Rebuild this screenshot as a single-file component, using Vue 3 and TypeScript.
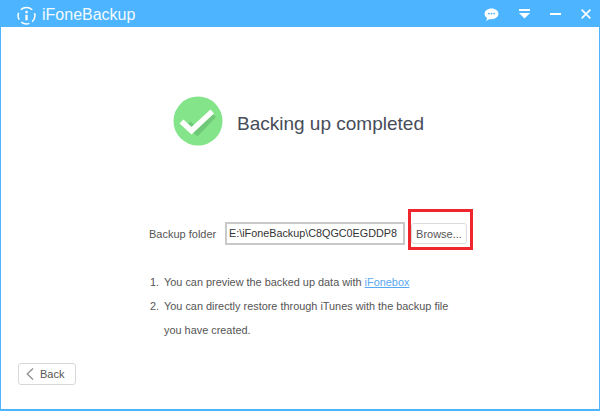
<script setup lang="ts">
const steps = [
  { n: '1.', text: 'You can preview the backed up data with ', link: 'iFonebox' },
  { n: '2.', text: 'You can directly restore through iTunes with the backup file', link: '' },
  { n: '', text: 'you have created.', link: '' },
]
</script>

<template>
  <div class="win">
    <header class="bar">
      <div class="brand">
        <svg class="logo" width="19" height="19" viewBox="0 0 20 20" fill="none" stroke="#fff">
          <path d="M4 4A8.800 8.800 0 0 1 16 4M18.500 7.500A8.800 8.800 0 0 1 16 16.400M13 18.300A8.800 8.800 0 0 1 4.600 17M2.300 14.400A8.800 8.800 0 0 1 1.700 7.200" stroke-width="1.600" />
          <path d="M10 9.300V15" stroke-width="2.400" />
          <circle cx="10" cy="6.400" r="1.400" fill="#fff" stroke="none" />
        </svg>
        <span class="title">iFoneBackup</span>
      </div>
      <div class="tools">
        <svg width="15" height="13" viewBox="0 0 16 14">
          <path d="M8 .5c4.200 0 7.500 2.500 7.500 5.700S12.200 12 8 12c-.8 0-1.500-.1-2.200-.2C4.800 12.800 3.300 13.500 1.800 13.400c.8-.6 1.400-1.500 1.500-2.600C1.500 9.700.5 8.100.5 6.200.5 3 3.800.5 8 .5z" fill="#fff" />
          <circle cx="5.200" cy="6" r="1" fill="#4db5ff" />
          <circle cx="8" cy="6" r="1" fill="#4db5ff" />
          <circle cx="10.800" cy="6" r="1" fill="#4db5ff" />
        </svg>
        <svg width="11" height="10" viewBox="0 0 11 10">
          <rect x="0" y="0" width="11" height="2" fill="#fff" />
          <path d="M0 4h11L5.500 9.500z" fill="#fff" />
        </svg>
        <svg width="11" height="2" viewBox="0 0 11 2">
          <rect width="11" height="2" fill="#fff" />
        </svg>
        <svg width="10" height="10" viewBox="0 0 11 11" stroke="#fff" stroke-width="1.800">
          <path d="M.7.7l9.600 9.600M10.300.7L.7 10.300" />
        </svg>
      </div>
    </header>

    <main class="body">
      <section class="status">
        <svg class="check" width="50" height="50" viewBox="0 0 50 50">
          <circle cx="25" cy="25" r="24.500" fill="#84e48a" />
          <path d="M11 28.500l5-4.500 7 7L38 16l3.500 3.500L23 39z" fill="#66bd70" opacity=".7" transform="translate(1.500 1.500)" />
          <path d="M6.500 27.500l4-4 8 7.500 19-17.500 3.500 4-22.500 21z" fill="#fff" />
        </svg>
        <h1>Backing up completed</h1>
      </section>

      <section class="folder">
        <span class="label">Backup folder</span>
        <div class="path">E:\iFoneBackup\C8QGC0EGDDP8</div>
        <div class="action">
          <button class="browse" type="button">Browse...</button>
          <div class="mark"></div>
        </div>
      </section>

      <ul class="steps">
        <li v-for="s in steps" :key="s.text">
          <span class="num">{{ s.n }}</span>
          <span>{{ s.text }}<a v-if="s.link">{{ s.link }}</a></span>
        </li>
      </ul>

      <button class="back" type="button">
        <svg width="8" height="12" viewBox="0 0 8 12" fill="none" stroke="#8a8a8a" stroke-width="1.200">
          <path d="M7 .5L1.200 6 7 11.500" />
        </svg>
        Back
      </button>
    </main>
  </div>
</template>

<style scoped>
.win {
  width: 600px;
  height: 411px;
  box-sizing: border-box;
  display: flex;
  flex-direction: column;
  font-family: "Liberation Sans", Arial, sans-serif;
  overflow: hidden;
}
.bar {
  height: 27px;
  flex: none;
  background: #4db5ff;
  color: #fff;
  display: flex;
  align-items: center;
  justify-content: space-between;
  padding: 0 9px 0 17px;
}
.brand {
  display: flex;
  align-items: center;
  gap: 6px;
  margin-top: 3px;
}
.title {
  font-size: 16px;
  color: #f2faff;
}
.tools {
  display: flex;
  align-items: center;
  gap: 20px;
  margin-top: 1px;
}
.body {
  flex: 1;
  border: solid #4db5ff;
  border-width: 0 1px 2px 1px;
  background: #fff;
  display: flex;
  flex-direction: column;
  padding-left: 17px;
}
.status {
  display: flex;
  align-items: center;
  gap: 14px;
  margin: 69px 0 0 155px;
}
.check {
  flex: none;
}
h1 {
  margin: 0;
  padding-top: 6px;
  font-size: 19px;
  font-weight: 400;
  color: #484c58;
}
.folder {
  display: flex;
  align-items: center;
  margin-top: 76px;
  margin-left: 131px;
}
.label {
  font-size: 11px;
  color: #555;
  width: 76px;
  flex: none;
}
.path {
  width: 180px;
  height: 23px;
  box-sizing: border-box;
  border: 2px solid #c9c9c9;
  font-size: 10.800px;
  line-height: 19px;
  padding-left: 2px;
  color: #333;
  white-space: nowrap;
  overflow: hidden;
}
.action {
  position: relative;
  margin-left: 6px;
}
.browse {
  display: block;
  width: 56px;
  height: 21px;
  padding: 0;
  background: #fff;
  border: 1px solid #dcdcdc;
  border-radius: 3px;
  font: 11px "Liberation Sans", Arial, sans-serif;
  color: #555;
}
.mark {
  position: absolute;
  left: -3px;
  top: -14px;
  width: 65px;
  height: 41px;
  box-sizing: border-box;
  border: 3px solid #f0262e;
}
.steps {
  list-style: none;
  margin: 25px 0 0 132px;
  padding: 0;
  font-size: 10.900px;
  color: #555;
}
.steps li {
  display: flex;
  height: 24px;
  line-height: 24px;
}
.num {
  width: 14px;
  flex: none;
}
.steps a {
  color: #5aa9f2;
  text-decoration: underline;
}
.back {
  margin-top: 21px;
  width: 58px;
  height: 22px;
  padding: 0 0 0 7px;
  display: flex;
  align-items: center;
  gap: 6px;
  background: #fff;
  border: 1px solid #d8d8d8;
  border-radius: 3px;
  font: 11px "Liberation Sans", Arial, sans-serif;
  color: #555;
  box-sizing: border-box;
}
</style>
